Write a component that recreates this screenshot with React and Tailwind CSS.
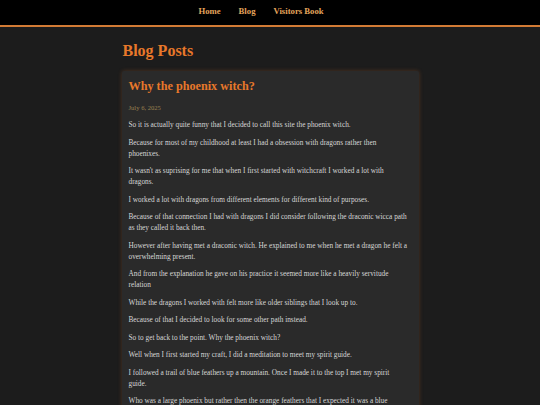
import React from 'react';

const paragraphs = [
  'So it is actually quite funny that I decided to call this site the phoenix witch.',
  'Because for most of my childhood at least I had a obsession with dragons rather then phoenixes.',
  "It wasn't as suprising for me that when I first started with witchcraft I worked a lot with dragons.",
  'I worked a lot with dragons from different elements for different kind of purposes.',
  'Because of that connection I had with dragons I did consider following the draconic wicca path as they called it back then.',
  'However after having met a draconic witch. He explained to me when he met a dragon he felt a overwhelming present.',
  'And from the explanation he gave on his practice it seemed more like a heavily servitude relation',
  'While the dragons I worked with felt more like older siblings that I look up to.',
  'Because of that I decided to look for some other path instead.',
  'So to get back to the point. Why the phoenix witch?',
  'Well when I first started my craft, I did a meditation to meet my spirit guide.',
  'I followed a trail of blue feathers up a mountain. Once I made it to the top I met my spirit guide.',
  'Who was a large phoenix but rather then the orange feathers that I expected it was a blue phoenix.',
  'And that is basically why I call myself the phoenix witch.',
];

const navLinks = ['Home', 'Blog', 'Visitors Book'];

export default function App() {
  return (
    <div className="bg-[#1c1c1c] font-['Liberation_Serif',serif] overflow-hidden h-[405px]">
      <header className="bg-black border-b-2 border-[#d27b35] h-[27px] flex items-center justify-center">
        <nav className="flex gap-[18px] pr-[18px] -mt-[1px]">
          {navLinks.map((link) => (
            <a key={link} href="#" className="text-[8.7px] font-bold text-[#e3a45c]">
              {link}
            </a>
          ))}
        </nav>
      </header>

      <main className="w-[297px] mx-auto pt-[14px]">
        <h1 className="text-[16px] font-bold text-[#e8782a] pl-[1px] leading-[20px]">Blog Posts</h1>

        <article className="mt-[10px] bg-[#2a2a2a] rounded-[2px] pl-[7px] pr-[10.5px] pt-[7px] pb-4 shadow-[0_0_4px_rgba(232,120,42,0.25)]">
          <h2 className="text-[12.2px] font-bold text-[#e8782a] leading-[16px]">Why the phoenix witch?</h2>
          <p className="text-[6.6px] text-[#9a8050] mt-[9px] leading-[10px]">July 6, 2025</p>
          <div className="mt-[6px] text-[7.3px] leading-[11px] text-[#d6d6d6]">
            {paragraphs.map((p, i) => (
              <p key={i} className="mb-[6.5px]">{p}</p>
            ))}
          </div>
        </article>
      </main>
    </div>
  );
}
